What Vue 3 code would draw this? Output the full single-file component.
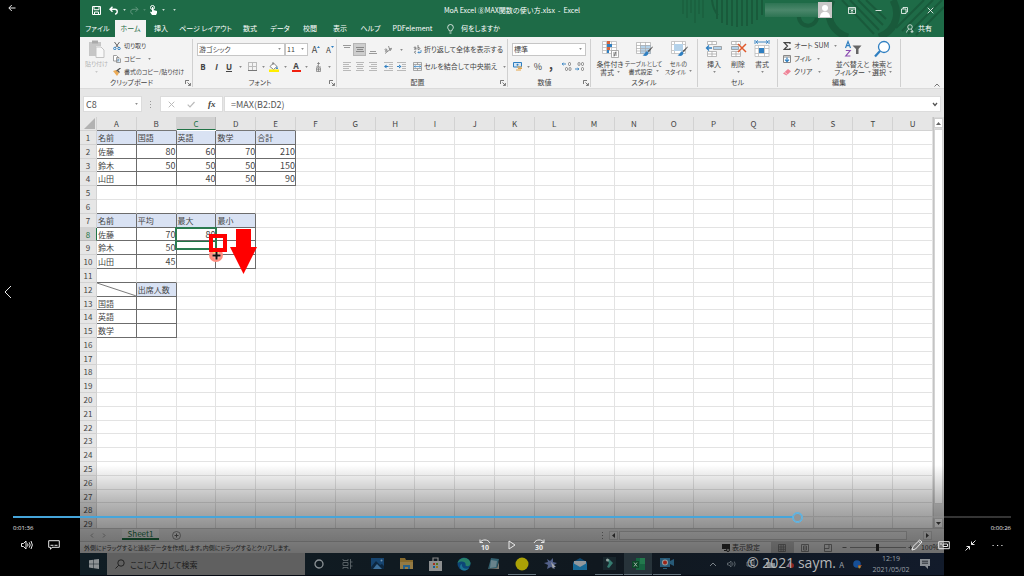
<script setup>
import { ref, computed } from 'vue'

const columns = 'ABCDEFGHIJKLMNOPQRSTU'.split('')
const tabs = [
  { label: 'ファイル', size: 'w35' },
  { label: 'ホーム', size: 'w31', active: true },
  { label: '挿入', size: 'w30' },
  { label: 'ページ レイアウト', size: 'w59' },
  { label: '数式', size: 'w30' },
  { label: 'データ', size: 'w30' },
  { label: '校閲', size: 'w30' },
  { label: '表示', size: 'w30' },
  { label: 'ヘルプ', size: 'w31' },
  { label: 'PDFelement', size: 'w53' },
]

const data = {
  1: ['名前', '国語', '英語', '数学', '合計'],
  2: ['佐藤', 80, 60, 70, 210],
  3: ['鈴木', 50, 50, 50, 150],
  4: ['山田', '', 40, 50, 90],
  7: ['名前', '平均', '最大', '最小'],
  8: ['佐藤', 70, 80, ''],
  9: ['鈴木', 50, '', ''],
  10: ['山田', 45, '', ''],
  12: ['', '出席人数'],
  13: ['国語', ''],
  14: ['英語', ''],
  15: ['数学', ''],
}
const inTable = (r, c) => Boolean(data[r]) && c < data[r].length
const rows = Array.from({ length: 29 }, (_, i) => {
  const r = i + 1
  return {
    r,
    cells: columns.map((_, c) => {
      const value = inTable(r, c) ? data[r][c] : ''
      return {
        value,
        cls: {
          num: typeof value === 'number',
          head: inTable(r, c) && (r === 1 || r === 7 || (r === 12 && c === 1)),
          db: inTable(r, c) || inTable(r + 1, c),
          dr: inTable(r, c) || inTable(r, c + 1),
          diag: r === 12 && c === 0,
        },
      }
    }),
  }
})

const fontName = ref('游ゴシック')
const fontSize = ref('11')
const numberFormat = ref('標準')
const formula = ref('=MAX(B2:D2)')
const cellName = ref('C8')
const zoom = ref(50)
const seek = ref(789)
const seekStyle = computed(() => ({ '--played': seek.value / 10 + '%' }))
</script>

<template>
  <svg class="defs" aria-hidden="true">
    <symbol id="caret" viewBox="0 0 4 3"><path d="M0 .5h4L2 2.7z" fill="currentColor" /></symbol>
    <symbol id="launch" viewBox="0 0 6 6"><path d="M.5 4V.5H4M2.5 2.5l2.8 2.8M5.4 3v2.4H3" fill="none" stroke="currentColor" stroke-width=".7" /></symbol>
    <symbol id="brush" viewBox="0 0 10 10"><path d="M9.600 .5L5 4.500l1.200 1.200L9.900 1z" fill="#555" /><path d="M4.600 4.800C3 5 3 7.500 .5 8.500c2.500 1.500 5.500 .5 5.300-2.500z" fill="#2f7fc1" /></symbol>
  </svg>

  <main class="player">
    <aside class="side">
      <button class="pb top" aria-label="戻る"><svg width="8" height="8" viewBox="0 0 8 8"><path d="M7.500 4H1M3.800 1L.8 4l3 3" /></svg></button>
      <button class="pb prev" aria-label="前へ"><svg width="8" height="14" viewBox="0 0 8 14"><path d="M7 1L1 7l6 6" /></svg></button>
    </aside>

    <section class="desktop">
      <div class="excel">
        <header class="green">
          <svg class="art" width="270" height="37" viewBox="0 0 270 37" aria-hidden="true">
            <g fill="none" stroke="#195a3b" stroke-width="2">
              <path d="M9 0v14M13 0v18M17 0v13M21 0v23M25 0v14M29 0v18" stroke-width="1" />
              <path d="M38 0q1 10 6 15M43 0v19M48 0v23M53 0v25M58 0v26M63 0v27M68 0v26M73 0v26M78 0v24M83 0v20M88 0v15" />
              <path d="M125 15a9 9 0 0 0 18 3" stroke-width="4" />
              <path d="M158 0c-8 16 0 32 16 37M205 37c20-8 20-26 14-37" stroke-width="7" />
              <path d="M168 0l32 34M176 0l29 30M184 0l25 25M192 0l20 19M222 28l28-28M228 31l31-31M234 34l34-34M242 35l28-28" />
            </g>
          </svg>
          <div class="titlebar">
            <div class="quick">
              <button aria-label="上書き保存"><svg width="9" height="9" viewBox="0 0 9 9"><path d="M.5.5h8v8h-8zM2 .5v3.200h5V.5M2.500 8.500V6h4v2.500" fill="none" stroke="#fff" /></svg></button>
              <button aria-label="元に戻す"><svg width="9" height="9" viewBox="0 0 9 9"><path d="M3.500.8L1 3.300l2.500 2.500M1.200 3.300H6c3 0 3 4.500 0 4.800" fill="none" stroke="#fff" stroke-width="1.400" /></svg></button>
              <svg class="caret"><use href="#caret" /></svg>
              <button class="off" aria-label="やり直し"><svg width="9" height="9" viewBox="0 0 9 9"><path d="M5.500.8L8 3.300 5.500 5.800M7.800 3.300H3c-3 0-3 4.500 0 4.800" fill="none" stroke="#fff" /></svg></button>
              <svg class="caret off"><use href="#caret" /></svg>
              <button aria-label="タッチ"><svg width="9" height="10" viewBox="0 0 9 10"><circle cx="3.500" cy="2.500" r="2" fill="none" stroke="#fff" /><path d="M3 2h1.300v3L8 6v2L7 10H3L1 7l1-.5 1 .8z" fill="#fff" /></svg></button>
              <svg class="caret"><use href="#caret" /></svg>
              <svg class="caret last"><use href="#caret" /></svg>
            </div>
            <h1>MoA Excel ⑧MAX関数の使い方.xlsx&nbsp; -&nbsp; Excel</h1>
            <div class="winbtns">
              <span class="account"></span>
              <svg width="14" height="16" viewBox="0 0 14 16"><path fill="#c9c7c7" d="M0 0h14v16H0z" /><circle cx="7" cy="6" r="3" fill="#fff" /><path d="M2 15c0-7 10-7 10 0z" fill="#fff" /></svg>
              <button aria-label="リボンの表示オプション"><svg width="8" height="7" viewBox="0 0 8 7"><path d="M.5.5h7v6h-7zM.5 2h7M4 6V3M2.700 4.200L4 3l1.300 1.200" /></svg></button>
              <button aria-label="最小化"><svg width="7" height="7" viewBox="0 0 7 7"><path d="M.5 3.500h6" /></svg></button>
              <button aria-label="元に戻す(縮小)"><svg width="7" height="7" viewBox="0 0 7 7"><path d="M.5 2h4.500v4.500H.5zM2 2V.5h4.500V5H5" /></svg></button>
              <button aria-label="閉じる"><svg width="7" height="7" viewBox="0 0 7 7"><path d="M.7.7l5.600 5.600M6.300.7L.7 6.300" /></svg></button>
            </div>
          </div>
          <nav class="tabs">
            <button v-for="t in tabs" :key="t.label" :class="[t.size, { active: t.active }]">{{ t.label }}</button>
            <button class="tell"><svg width="7" height="10" viewBox="0 0 7 10"><path d="M2.300 7C2.300 5.500.7 5 .7 3.300a2.800 2.800 0 0 1 5.600 0C6.300 5 4.700 5.500 4.700 7zM2.500 9h2" fill="none" stroke="#fff" stroke-width=".8" /></svg>何をしますか</button>
            <button class="share"><svg width="8" height="9" viewBox="0 0 8 9"><circle cx="4" cy="3" r="2.300" fill="none" stroke="#fff" stroke-width=".7" /><path d="M.5 8.500C1 6.500 2 5.500 3 5.200M5 5.200c1 .3 1 .8 1.500 1.500M4.500 7.700h3M6 6.200v3" fill="none" stroke="#fff" stroke-width=".7" /></svg>共有</button>
          </nav>
        </header>

        <div class="ribbon">
          <section class="group g-clip">
            <div class="body">
              <button class="big paste"><svg width="17" height="18" viewBox="0 0 17 18"><path d="M1 2h12v4H8v10H1z" fill="#c6c6c6" /><path d="M4 .5h6v3H4z" fill="#aaa" /><path d="M8 7h5l3 3v7.500H8z" fill="#f8f8f8" stroke="#c3c3c3" /></svg><span>貼り付け</span><svg class="caret"><use href="#caret" /></svg></button>
              <div class="list">
                <button><svg width="8" height="8" viewBox="0 0 8 8"><path d="M1.500 0l4 5.500M6.500 0l-4 5.500" stroke="#555" fill="none" stroke-width=".9" /><circle cx="1.800" cy="6.500" r="1.200" fill="none" stroke="#2f7fc1" /><circle cx="6" cy="6.500" r="1.200" fill="none" stroke="#2f7fc1" /></svg>切り取り</button>
                <button><svg width="8" height="8" viewBox="0 0 8 8"><path d="M.5.5h3L5 2v4H.5zM3.500 2.500h2.500l1.500 1.500v3.500h-4z" fill="#fff" stroke="#888" stroke-width=".8" /><path d="M4.500 4.700h2M4.500 6h2" stroke="#2f7fc1" stroke-width=".6" /></svg>コピー<svg class="caret"><use href="#caret" /></svg></button>
                <button><svg width="8" height="8" viewBox="0 0 8 8"><path d="M0 3l3-1 3 3-2 3z" fill="#edab55" /><path d="M3.500 3L7.500 0M4 2l2.500 2.500" stroke="#555" stroke-width="1.200" /></svg>書式のコピー/貼り付け</button>
              </div>
            </div>
            <footer><span>クリップボード</span><button aria-label="クリップボード詳細"><svg width="6" height="6"><use href="#launch" /></svg></button></footer>
          </section>

          <section class="group g-font">
            <div class="body rows">
              <div class="line font-top">
                <span class="sel"><select v-model="fontName" aria-label="フォント名"><option>游ゴシック</option></select><svg class="caret"><use href="#caret" /></svg></span>
                <span class="sel"><select v-model="fontSize" aria-label="フォント サイズ"><option>11</option></select><svg class="caret"><use href="#caret" /></svg></span>
                <button class="aa">A<svg width="3" height="3" viewBox="0 0 3 3"><path d="M0 3l1.500-2L3 3z" fill="#2f7fc1" /></svg></button>
                <button class="aa sm">A<svg width="3" height="3" viewBox="0 0 3 3"><path d="M0 1l1.500 2L3 1z" fill="#2f7fc1" /></svg></button>
              </div>
              <div class="line font-bot">
                <button class="b">B</button><button class="it">I</button><button class="u">U</button><svg class="caret"><use href="#caret" /></svg>
                <button aria-label="罫線"><svg width="9" height="9" viewBox="0 0 9 9"><path d="M.5 0v8M4.500 0v8M8.500 0v8M0 .5h9M0 4.500h9" stroke="#bbb" /><path d="M0 8.500h9" stroke="#777" /></svg></button><svg class="caret"><use href="#caret" /></svg>
                <button aria-label="塗りつぶし"><svg width="10" height="10" viewBox="0 0 10 10"><path d="M1 4.500L4.500 1 8 4.500 4.500 7.500zM4 0v3" fill="#fff" stroke="#666" stroke-width=".8" /><path d="M8 4l1 3H7z" fill="#2f7fc1" /><path d="M0 7.500h10V10H0z" fill="#ffee00" /></svg></button><svg class="caret"><use href="#caret" /></svg>
                <button class="fc">A</button><svg class="caret"><use href="#caret" /></svg>
                <button aria-label="ふりがな"><svg width="7" height="10" viewBox="0 0 7 10"><path d="M2 1.500h3M3.500 0v3.500L2 4M1 5h5M3.500 4v1M1.500 6h4v3.500h-4zM1.500 7.700h4M3.500 6v3.500" fill="none" stroke="#777" stroke-width=".7" /></svg></button><svg class="caret"><use href="#caret" /></svg>
              </div>
            </div>
            <footer><span>フォント</span><button aria-label="フォント詳細"><svg width="6" height="6"><use href="#launch" /></svg></button></footer>
          </section>

          <section class="group g-align">
            <div class="body rows">
              <div class="line al">
                <button aria-label="上揃え"><svg width="8" height="9" viewBox="0 0 8 9"><path d="M0 .5h8M1 2.500h6" stroke="#999" /></svg></button>
                <button class="on" aria-label="上下中央揃え"><svg width="8" height="9" viewBox="0 0 8 9"><path d="M0 2.500h8M1 4.500h6M0 6.500h8" stroke="#888" /></svg></button>
                <button aria-label="下揃え"><svg width="8" height="9" viewBox="0 0 8 9"><path d="M1 6.500h6M0 8.500h8" stroke="#999" /></svg></button>
                <i></i>
                <button aria-label="方向"><svg width="9" height="8" viewBox="0 0 9 8"><path d="M1 7.500L8 2M1 4c0-2 2-1 2 0v1.500M3 4c-2 0-2.500 2-.5 1.500M4.500 0l1.500 4.500c1.500 0 1.500-2.500-.5-2" fill="none" stroke="#777" stroke-width=".8" /></svg></button>
                <svg class="caret"><use href="#caret" /></svg>
                <i></i>
                <button class="txt"><svg width="9" height="9" viewBox="0 0 9 9"><path d="M1 3c0-1.500 2-1.500 2 0v1.500M3 3.300c-2 0-2.300 1.500-.5 1.200M5 0v4.500c2.500.5 2.500-2.500 0-2M3 6.200c-2-.5-2 2.500 0 2" fill="none" stroke="#666" stroke-width=".8" /><path d="M8 5v2.500H5M6 6.300L5 7.500l1 1" fill="none" stroke="#2f7fc1" stroke-width=".8" /></svg>折り返して全体を表示する</button>
              </div>
              <div class="line al">
                <button aria-label="左揃え"><svg width="8" height="9" viewBox="0 0 8 9"><path d="M0 .5h8M0 2.500h6M0 4.500h8M0 6.500h6M0 8.500h8" stroke="#aaa" stroke-width=".8" /></svg></button>
                <button aria-label="中央揃え"><svg width="8" height="9" viewBox="0 0 8 9"><path d="M0 .5h8M1 2.500h6M0 4.500h8M1 6.500h6M0 8.500h8" stroke="#aaa" stroke-width=".8" /></svg></button>
                <button aria-label="右揃え"><svg width="8" height="9" viewBox="0 0 8 9"><path d="M0 .5h8M2 2.500h6M0 4.500h8M2 6.500h6M0 8.500h8" stroke="#aaa" stroke-width=".8" /></svg></button>
                <i></i>
                <button aria-label="インデントを減らす"><svg width="9" height="9" viewBox="0 0 9 9"><path d="M0 .5h9M5 2.500h4M5 4.500h4M5 6.500h4M0 8.500h9" stroke="#aaa" stroke-width=".8" /><path d="M0 4.500L2.500 2.500v4zM2 4h2.500v1H2z" fill="#2f7fc1" /></svg></button>
                <button aria-label="インデントを増やす"><svg width="9" height="9" viewBox="0 0 9 9"><path d="M0 .5h9M5 2.500h4M5 4.500h4M5 6.500h4M0 8.500h9" stroke="#aaa" stroke-width=".8" /><path d="M4.500 4.500L2 2.500v4zM0 4h2.500v1H0z" fill="#2f7fc1" /></svg></button>
                <i></i>
                <button class="txt"><svg width="9" height="9" viewBox="0 0 9 9"><path d="M.5.5h8v8h-8zM.5 2.500h8M.5 6.500h8M4.500.5v2M4.500 6.500v2" fill="none" stroke="#888" stroke-width=".7" /><path d="M1 4.500h7M2.500 3.500l-1.300 1 1.300 1M6.500 3.500l1.300 1-1.300 1" fill="none" stroke="#2f7fc1" stroke-width=".7" /></svg>セルを結合して中央揃え<svg class="caret"><use href="#caret" /></svg></button>
              </div>
            </div>
            <footer><span>配置</span><button aria-label="配置詳細"><svg width="6" height="6"><use href="#launch" /></svg></button></footer>
          </section>

          <section class="group g-num">
            <div class="body rows">
              <div class="line num-top"><span class="sel"><select v-model="numberFormat" aria-label="数値の書式"><option>標準</option></select><svg class="caret"><use href="#caret" /></svg></span></div>
              <div class="line num-bot">
                <button aria-label="通貨"><svg width="10" height="9" viewBox="0 0 10 9"><path d="M.5.5h8v4.500h-8z" fill="#d6e6f4" stroke="#2f7fc1" /><circle cx="4.500" cy="2.800" r="1" fill="#2f7fc1" /><path d="M4 5h5M5 6.500h4M3 8h5" stroke="#e5a54b" stroke-width="1.200" /></svg></button>
                <svg class="caret"><use href="#caret" /></svg>
                <button class="pct">%</button><button class="comma">,</button><i></i>
                <button aria-label="小数点以下の表示桁数を増やす"><svg width="10" height="9" viewBox="0 0 10 9"><path d="M0 2h4M1.500.7L.2 2l1.300 1.300" fill="none" stroke="#2f7fc1" stroke-width=".9" /><rect x="6.500" y=".5" width="2" height="3" rx="1" fill="none" stroke="#666" stroke-width=".7" /><rect x="3.500" y="5.500" width="2" height="3" rx="1" fill="none" stroke="#666" stroke-width=".7" /><rect x="7" y="5.500" width="2" height="3" rx="1" fill="none" stroke="#666" stroke-width=".7" /></svg></button>
                <button aria-label="小数点以下の表示桁数を減らす"><svg width="10" height="9" viewBox="0 0 10 9"><path d="M0 7h4M2.500 5.700L3.800 7 2.500 8.300" fill="none" stroke="#2f7fc1" stroke-width=".9" /><rect x="3" y=".5" width="2" height="3" rx="1" fill="none" stroke="#666" stroke-width=".7" /><rect x="6.500" y=".5" width="2" height="3" rx="1" fill="none" stroke="#666" stroke-width=".7" /><rect x="6.500" y="5.500" width="2" height="3" rx="1" fill="none" stroke="#666" stroke-width=".7" /></svg></button>
              </div>
            </div>
            <footer><span>数値</span><button aria-label="数値詳細"><svg width="6" height="6"><use href="#launch" /></svg></button></footer>
          </section>

          <section class="group g-style">
            <div class="body">
              <button class="big"><svg width="18" height="18" viewBox="0 0 18 18"><path d="M1.500 1.500h14v12h-14zM1.500 4.500h14M1.500 7.500h14M1.500 10.500h14M5.500 1.500v12M10.500 1.500v12" fill="#fff" stroke="#bbb" stroke-width=".8" /><path d="M6 1h3v3H6zM6 7h3v3H6z" fill="#d9663b" /><path d="M6 4h5v3H6zM6 10h2v3H6z" fill="#2f7fc1" /><path d="M10.500 10.500h7v7h-7z" fill="#fff" stroke="#999" stroke-width=".8" /><path d="M12 13h4M12 15h4M15 11.500l-2 5" stroke="#555" stroke-width=".7" /></svg><span>条件付き<br>書式<svg class="caret"><use href="#caret" /></svg></span></button>
              <button class="big narrow"><svg width="18" height="18" viewBox="0 0 18 18"><path d="M1.500 2.500h14v11h-14z" fill="#fff" /><path d="M5 5h11v9H5z" fill="#b4d2ea" /><path d="M1.500 2.500h14v11h-14zM1.500 5.500h14M1.500 8.500h14M1.500 11h14M5.500 2.500v11M10.500 2.500v11" fill="none" stroke="#aaa" stroke-width=".7" /><use href="#brush" x="7" y="6" width="11" height="11" /></svg><span>テーブルとして<br>書式設定<svg class="caret"><use href="#caret" /></svg></span></button>
              <button class="big narrow"><svg width="18" height="18" viewBox="0 0 18 18"><path d="M1.500 1.500h14v12h-14zM1.500 4.500h14M1.500 10.500h14M4.500 1.500v12M12.500 1.500v12" fill="#fff" stroke="#bbb" stroke-width=".8" /><path d="M4 4h9v7H4z" fill="#b4d2ea" /><use href="#brush" x="7" y="6" width="11" height="11" /></svg><span>セルの<br>スタイル<svg class="caret"><use href="#caret" /></svg></span></button>
            </div>
            <footer><span>スタイル</span></footer>
          </section>

          <section class="group g-cell">
            <div class="body">
              <button class="big"><svg width="18" height="18" viewBox="0 0 18 18"><path d="M2.500 1.500h9v3h-9zM7 1.500v3M2.500 11.500h9v5h-9zM7 11.500v5M2.500 14h9" fill="#fff" stroke="#aaa" stroke-width=".8" /><path d="M8.500 6.500h8v3h-8z" fill="#b4d2ea" stroke="#888" stroke-width=".7" /><path d="M7 8H1.500M4 5.500L1.500 8 4 10.500" fill="none" stroke="#2f7fc1" stroke-width="1.300" /></svg><span>挿入</span><svg class="caret"><use href="#caret" /></svg></button>
              <button class="big"><svg width="18" height="18" viewBox="0 0 18 18"><path d="M2.500 1.500h9v3h-9zM7 1.500v3M2.500 11.500h9v5h-9zM7 11.500v5M2.500 14h9" fill="#fff" stroke="#aaa" stroke-width=".8" /><path d="M2.500 6.500h7v3h-7z" fill="#b4d2ea" stroke="#888" stroke-width=".7" /><path d="M9 4l8 8M17 4l-8 8" stroke="#e0592b" stroke-width="1.500" /></svg><span>削除</span><svg class="caret"><use href="#caret" /></svg></button>
              <button class="big"><svg width="18" height="18" viewBox="0 0 18 18"><path d="M2 5.500h14v11H2zM2 8.500h14M2 13.500h14M5.500 5.500v11M11.500 5.500v11" fill="#fff" stroke="#bbb" stroke-width=".8" /><path d="M6 8h5v5H6z" fill="#2f7fc1" /><path d="M3 2h12M5 .3L3 2l2 1.700M13 .3L15 2l-2 1.700M2 0v4M16 0v4" fill="none" stroke="#2f7fc1" stroke-width=".9" /></svg><span>書式</span><svg class="caret"><use href="#caret" /></svg></button>
            </div>
            <footer><span>セル</span></footer>
          </section>

          <section class="group g-edit">
            <div class="body">
              <div class="list">
                <button><svg width="8" height="8" viewBox="0 0 8 8"><path d="M7 2V.7H1.300L4.500 4 1.300 7.300H7V6" fill="none" stroke="#444" stroke-width="1.200" /></svg>オート SUM<svg class="caret"><use href="#caret" /></svg></button>
                <button><svg width="8" height="8" viewBox="0 0 8 8"><path d="M.5.5h7v7h-7zM.5 2h7" fill="#fff" stroke="#888" /><path d="M4 2.500v4M2 4.700l2 2 2-2" fill="none" stroke="#2f7fc1" stroke-width="1.200" /></svg>フィル<svg class="caret"><use href="#caret" /></svg></button>
                <button><svg width="8" height="8" viewBox="0 0 8 8"><path d="M0 5.500L5 1l3 2.300L3.500 7.500z" fill="#ef8296" /><path d="M1.500 4.200l3 2.300" stroke="#fff" stroke-width=".6" /></svg>クリア<svg class="caret"><use href="#caret" /></svg></button>
              </div>
              <button class="big sort"><svg width="18" height="18" viewBox="0 0 18 18"><path d="M1.500 8L4 1.500 6.500 8M2.500 5.700h3" fill="none" stroke="#2f7fc1" stroke-width="1.200" /><path d="M1.800 10.500h4.400L1.800 16h4.600" fill="none" stroke="#8a4bb0" stroke-width="1.200" /><path d="M8.500 5.500h9L14.500 9v5h-2.500V9z" fill="#666" /></svg><span>並べ替えと<br>フィルター<svg class="caret"><use href="#caret" /></svg></span></button>
              <button class="big find"><svg width="18" height="18" viewBox="0 0 18 18"><circle cx="11" cy="7" r="5.500" fill="#fff" stroke="#2f7fc1" stroke-width="1.300" /><path d="M7 11l-5 5.500" stroke="#2f7fc1" stroke-width="2.200" /></svg><span>検索と<br>選択<svg class="caret"><use href="#caret" /></svg></span></button>
            </div>
            <footer><span>編集</span></footer>
          </section>
          <button class="collapse" aria-label="リボンを折りたたむ"><svg width="6" height="4" viewBox="0 0 6 4"><path d="M.5 3.500L3 1l2.500 2.500" fill="none" stroke="#555" stroke-width=".8" /></svg></button>
        </div>

        <div class="formula">
          <div class="name"><input v-model="cellName" aria-label="名前ボックス"><svg class="caret"><use href="#caret" /></svg></div>
          <svg class="grip" width="3" height="9" viewBox="0 0 3 9"><path d="M1 1h1v1H1zM1 4h1v1H1zM1 7h1v1H1z" fill="#999" /></svg>
          <div class="fx">
            <button aria-label="キャンセル"><svg width="7" height="7" viewBox="0 0 7 7"><path d="M.7.7l5.600 5.600M6.300.7L.7 6.300" fill="none" stroke="#bbb" /></svg></button>
            <button aria-label="入力"><svg width="8" height="7" viewBox="0 0 8 7"><path d="M.7 3.700L3 6l4.500-5" fill="none" stroke="#bbb" stroke-width="1.200" /></svg></button>
            <button class="fn">fx</button>
          </div>
          <div class="fin"><input v-model="formula" aria-label="数式"><svg width="6" height="5" viewBox="0 0 6 5"><path d="M1 1l2 2.500L5 1" fill="none" stroke="#555" stroke-width="1.300" /></svg></div>
        </div>

        <div class="sheet">
          <div class="gridwrap">
            <table>
              <thead>
                <tr>
                  <th class="corner"><svg width="11" height="11" viewBox="0 0 11 11"><path d="M11 0v11H0z" fill="#b2b2b2" /></svg></th>
                  <th v-for="(c, i) in columns" :key="c" :class="{ sel: c === 'C', dk: i < 5 && c !== 'C' }">{{ c }}</th>
                </tr>
              </thead>
              <tbody>
                <tr v-for="row in rows" :key="row.r">
                  <th :class="{ sel: row.r === 8 }">{{ row.r }}</th>
                  <td v-for="(cell, i) in row.cells" :key="i" :class="cell.cls">{{ cell.value }}<svg v-if="cell.cls.diag" viewBox="0 0 40 13" preserveAspectRatio="none"><path d="M0 0l40 13" stroke="#555" stroke-width=".8" /></svg></td>
                </tr>
              </tbody>
            </table>
            <div class="active-cell"></div>
            <div class="drag"></div>
            <svg class="marks" width="50" height="48" viewBox="0 0 50 48" aria-hidden="true">
              <circle cx="8" cy="27" r="7" fill="#ff8d7f" />
              <path d="M5 21h6v4H5z" fill="#e6e05a" />
              <path d="M8.500 23.500v8M4.500 27.500h8" stroke="#fff" stroke-width="3.600" opacity=".5" />
              <path d="M8.500 23.500v8M4.500 27.500h8" stroke="#111" stroke-width="2" />
              <path d="M3 8h14v14H3z" fill="none" stroke="#f00" stroke-width="4" />
              <path d="M28 1h15v18h6L35.500 46 22 19h6z" fill="#f00" />
            </svg>
          </div>
          <div class="vscroll">
            <button aria-label="上へ"><svg width="5" height="3" viewBox="0 0 5 3"><path d="M0 3l2.500-3L5 3z" fill="#666" /></svg></button>
            <span class="thumb"></span>
            <button aria-label="下へ"><svg width="5" height="3" viewBox="0 0 5 3"><path d="M0 0l2.500 3L5 0z" fill="#444" /></svg></button>
          </div>
        </div>

        <div class="sheetbar">
          <button class="nav" aria-label="前のシート"><svg width="4" height="5" viewBox="0 0 4 5"><path d="M3 .5l-2 2 2 2" fill="none" stroke="#999" /></svg></button>
          <button class="nav" aria-label="次のシート"><svg width="4" height="5" viewBox="0 0 4 5"><path d="M1 .5l2 2-2 2" fill="none" stroke="#999" /></svg></button>
          <button class="sh">Sheet1</button>
          <button class="add" aria-label="新しいシート"><svg width="9" height="9" viewBox="0 0 9 9"><circle cx="4.500" cy="4.500" r="4" fill="none" stroke="#777" stroke-width=".8" /><path d="M2.500 4.500h4M4.500 2.500v4" stroke="#666" /></svg></button>
          <div class="hscroll">
            <svg class="grip" width="3" height="9" viewBox="0 0 3 9"><path d="M1 1h1v1H1zM1 4h1v1H1zM1 7h1v1H1z" fill="#888" /></svg>
            <button aria-label="左へ"><svg width="3" height="5" viewBox="0 0 3 5"><path d="M3 0L0 2.500 3 5z" fill="#444" /></svg></button>
            <span class="thumb"></span>
            <button aria-label="右へ"><svg width="3" height="5" viewBox="0 0 3 5"><path d="M0 0l3 2.500L0 5z" fill="#444" /></svg></button>
          </div>
        </div>

        <div class="status">
          <p>外側にドラッグすると連続データを作成します。内側にドラッグするとクリアします。</p>
          <button class="disp"><svg width="8" height="8" viewBox="0 0 8 8"><path d="M0 0h8v5H0zM2 6h3v1H2z" fill="#333" /><circle cx="6" cy="6" r="1.500" fill="#eee" stroke="#333" /></svg>表示設定</button>
          <button class="view on" aria-label="標準"><svg width="8" height="8" viewBox="0 0 8 8"><path d="M.5.5h7v7h-7zM.5 3h7M.5 5.300h7M3 .5v7M5.300.5v7" fill="none" stroke="#777" stroke-width=".8" /></svg></button>
          <button class="view" aria-label="ページ レイアウト"><svg width="8" height="8" viewBox="0 0 8 8"><path d="M.5.5h7v7h-7zM2.500 2h3v4h-3zM2.500 4h3" fill="none" stroke="#777" stroke-width=".8" /></svg></button>
          <button class="view" aria-label="改ページ プレビュー"><svg width="8" height="8" viewBox="0 0 8 8"><path d="M.5.5h7v7h-7zM.5 4.500h4.500V.5" fill="none" stroke="#777" stroke-width=".8" /></svg></button>
          <button class="zm" aria-label="縮小"><svg width="5" height="5" viewBox="0 0 5 5"><path d="M.5 2.500h4" stroke="#777" /></svg></button>
          <input v-model="zoom" class="zoom" type="range" min="0" max="100" aria-label="ズーム">
          <button class="zm" aria-label="拡大"><svg width="5" height="5" viewBox="0 0 5 5"><path d="M.5 2.500h4M2.500.5v4" stroke="#777" /></svg></button>
          <span class="pc">100%</span>
        </div>
        <div class="shade"></div>
      </div>

      <div class="taskbar">
        <button class="start" aria-label="スタート"><svg width="10" height="10" viewBox="0 0 10 10"><path d="M0 1.300L4.500.7v4H0zM5 .6L10 0v4.700H5zM0 5.200h4.500v4L0 8.600zM5 5.200h5V10l-5-.7z" fill="#8c9194" /></svg></button>
        <label class="search"><svg width="10" height="10" viewBox="0 0 10 10"><circle cx="6" cy="4" r="3.200" fill="none" stroke="#222" /><path d="M3.700 6.300L.5 9.500" stroke="#222" /></svg><input placeholder="ここに入力して検索" aria-label="検索"></label>
        <div class="apps">
          <button aria-label="Cortana"><svg width="10" height="10" viewBox="0 0 10 10"><circle cx="5" cy="5" r="4" fill="none" stroke="#8c9296" stroke-width="1.300" /></svg></button>
          <button aria-label="タスク ビュー"><svg width="12" height="10" viewBox="0 0 12 10"><path d="M1 3.500h5v3H1zM1 1V0M1 1.500h5V0M1 10V8.500h5V10M8.500 0v10M8 3h2.500M8 7h2.500" fill="none" stroke="#5d666b" stroke-width=".9" /></svg></button>
          <button aria-label="フォト"><svg width="13" height="11" viewBox="0 0 13 11"><path d="M0 0h13v11H0z" fill="#16446f" /><path d="M0 9l5-6 4 4 2-1 2 2v3H0z" fill="#0c263f" /><path d="M2 11l4-5 5 5z" fill="#3c6e99" /><circle cx="10.500" cy="2.500" r="1" fill="#6d90ad" /></svg></button>
          <button aria-label="エクスプローラー"><svg width="13" height="11" viewBox="0 0 13 11"><path d="M0 0h5l1 2h7v9H0z" fill="#86692c" /><path d="M0 4h13v7H0z" fill="#947a43" /><path d="M3 11V7h7v4H8V9H5v2z" fill="#27618a" /></svg></button>
          <button aria-label="Store"><svg width="13" height="14" viewBox="0 0 13 14"><path d="M4 4V1h5v3" fill="none" stroke="#888" stroke-width="1.200" /><path d="M0 4h13v10H0z" fill="#8d8f90" /><path d="M4 6h2v2H4z" fill="#a3321b" /><path d="M7 6h2v2H7z" fill="#4c7a20" /><path d="M4 9h2v2H4z" fill="#17618d" /><path d="M7 9h2v2H7z" fill="#9b7918" /></svg></button>
          <button aria-label="Edge"><svg width="14" height="14" viewBox="0 0 14 14"><circle cx="7" cy="7" r="6.500" fill="#0c4678" /><path d="M.7 6C2 0 12-1 13.500 6c.3 3-3.500 4-5 2.500C9.500 5 5 3 .7 6z" fill="#278068" /><path d="M5 7c-1 4 4 6 7 4-3 4-9 3-9-1 0-2 1-3 2-3z" fill="#1c7391" /></svg></button>
          <button aria-label="メモ帳"><svg width="13" height="12" viewBox="0 0 13 12"><path d="M4 0l8 1-2 9-9 1z" fill="#32606f" /><path d="M4 2l6 1-1 6-6 1z" fill="#69838c" /><path d="M1 11l9-1 2-6 0 7z" fill="#7a7870" /></svg></button>
          <button class="run" aria-label="録画"><svg width="14" height="14" viewBox="0 0 14 14"><circle cx="7" cy="7" r="6.500" fill="#aaa106" /></svg></button>
          <button aria-label="ツール"><svg width="14" height="12" viewBox="0 0 14 12"><path d="M3 1l3 2 3-3v4l4 1-3 2 1 4-4-2-4 2 1-4-4-2 4-1z" fill="#53618a" /><path d="M7 4l5 5-2 0-1 2z" fill="#a4a6a9" /></svg></button>
          <button aria-label="メール"><svg width="14" height="12" viewBox="0 0 14 12"><path d="M0 4l7-4 7 4v8H0z" fill="#0e4870" /><path d="M1 3h12v4l-6 3-6-3z" fill="#92989c" /><path d="M0 5l7 4 7-4v7H0z" fill="#186996" /></svg></button>
          <button class="run" aria-label="Filmora"><svg width="13" height="13" viewBox="0 0 13 13"><path d="M0 0h13v13H0z" fill="#18262c" /><path d="M4 3l2-1 4 4-4 5-2-1 2-4z" fill="#357b70" /><circle cx="4.500" cy="3" r="1.500" fill="#93a5a2" /></svg></button>
          <button class="run lit" aria-label="Excel"><svg width="13" height="12" viewBox="0 0 13 12"><path d="M4 0h9v12H4z" fill="#176340" /><path d="M8 0h5v6H8z" fill="#23794d" /><path d="M0 3h7v7H0z" fill="#0d4728" /><path d="M2 4.500l3 4M5 4.500l-3 4" stroke="#a2b4aa" /></svg></button>
          <button class="run" aria-label="レコーダー"><svg width="14" height="12" viewBox="0 0 14 12"><path d="M0 0h10v9H0zM10 3l4-2v7l-4-2zM3 10h4v1H3z" fill="#275a78" /><circle cx="5" cy="4.500" r="3" fill="#999" /><circle cx="5" cy="4.500" r="2" fill="#9b2418" /></svg></button>
        </div>
        <div class="tray">
          <svg width="8" height="5" viewBox="0 0 8 5"><path d="M1 4l3-3 3 3" fill="none" stroke="#798087" /></svg>
          <svg width="9" height="8" viewBox="0 0 9 8"><path d="M.5 3h1.500L4 1v6L2 5H.5zM5.500 2.500q1 1.500 0 3M7.300 1.500q1.700 2.500 0 5" fill="none" stroke="#6a7279" stroke-width=".8" /></svg>
          <svg width="10" height="8" viewBox="0 0 10 8"><path d="M1 2h5v4H1zM3 .5h5v5M7 6l2 1" fill="none" stroke="#6a7279" /></svg>
          <svg width="10" height="8" viewBox="0 0 10 8"><path d="M0 2h4l1 1h4v5H1z" fill="#7d858a" /></svg>
          <svg width="8" height="8" viewBox="0 0 8 8"><path d="M0 7l4-6 3 6z" fill="#778" /><circle cx="5.500" cy="5.500" r="2.500" fill="#8a2424" /></svg>
        </div>
        <span class="ime">A</span>
        <svg class="ball" width="9" height="9" viewBox="0 0 9 9"><circle cx="4" cy="4" r="3.800" fill="#174f96" /><path d="M5 5h4L6 9z" fill="#9a4a2c" /><circle cx="6.500" cy="7" r="1.200" fill="#a98e38" /></svg>
        <div class="clock"><span>12:19</span><span>2021/05/02</span></div>
        <button class="note" aria-label="通知"><svg width="10" height="10" viewBox="0 0 10 10"><path d="M0 0h10v7H8v3L5 7H0z" fill="#8a8f95" /><path d="M2 2.200h6M2 4.200h6" stroke="#2a3138" /></svg></button>
      </div>
    </section>

    <aside class="side"></aside>

    <p class="mark">© 2021 saym.</p>
    <div class="controls">
      <input v-model="seek" class="seek" type="range" min="0" max="1000" aria-label="再生位置" :style="seekStyle">
      <div class="times"><span>0:01:36</span><span>0:00:26</span></div>
      <div class="bar">
        <div class="set">
          <button class="pb" aria-label="音量"><svg width="12" height="10" viewBox="0 0 12 10"><path d="M.5 3.500h2L5 1v8L2.500 6.500h-2zM6.500 3.500q1 1.500 0 3M8.200 2.300q2 2.700 0 5.400M10 1q2.700 4 0 8" /></svg></button>
          <button class="pb" aria-label="字幕"><svg width="12" height="10" viewBox="0 0 12 10"><path d="M.7.7h10.600v6.600H4L2.500 9.300V7.300H.7z" /><path d="M2.500 5.300h3M6.500 5.300h3" /></svg></button>
        </div>
        <div class="set">
          <button class="pb skip" aria-label="10秒戻る"><svg width="12" height="5" viewBox="0 0 12 5"><path d="M1 .5v3h3M1 3.500C3 0 9 0 11 4" /></svg><span>10</span></button>
          <button class="pb" aria-label="再生"><svg width="8" height="10" viewBox="0 0 8 10"><path d="M1 1l6 4-6 4z" /></svg></button>
          <button class="pb skip" aria-label="30秒進む"><svg width="12" height="5" viewBox="0 0 12 5"><path d="M11 .5v3H8M11 3.500C9 0 3 0 1 4" /></svg><span>30</span></button>
        </div>
        <div class="set">
          <button class="pb" aria-label="編集"><svg width="12" height="12" viewBox="0 0 12 12"><path d="M1 11l1-3.500L8.700 1l2.300 2L4.500 10zM7.500 2.200l2.300 2.200" /></svg></button>
          <button class="pb" aria-label="ミニ表示"><svg width="12" height="9" viewBox="0 0 12 9"><path d="M.7.7h10.600v7H.7zM5 3h4.500v2.500H5zM2 3h2" /></svg></button>
          <button class="pb" aria-label="全画面表示の終了"><svg width="11" height="11" viewBox="0 0 11 11"><path d="M10.500.5L6.500 4.500M6.500 1.500v3h3M.5 10.500l4-4M1.500 6.500h3v3" /></svg></button>
          <button class="pb" aria-label="その他"><svg width="11" height="3" viewBox="0 0 11 3"><path d="M.5 1.500h1.200M5 1.500h1.200M9.300 1.500h1.200" /></svg></button>
        </div>
      </div>
    </div>
  </main>
</template>

<style>
html, body { background: #000; }
</style>

<style scoped>
.player, .player * { box-sizing: border-box; }
.defs { position: absolute; width: 0; height: 0; }
.player {
  position: relative; display: flex; min-height: 100vh; background: #000; overflow: hidden;
  font-family: "Noto Sans CJK JP", "Noto Sans", sans-serif; font-size: 7px; line-height: 9px; color: #444;
}
.player svg { flex: none; }
button, input, select { font: inherit; color: inherit; border: 0; background: none; padding: 0; margin: 0; outline: 0; min-width: 0; }
button { display: flex; align-items: center; justify-content: center; white-space: nowrap; font-feature-settings: "palt"; }
.caret { width: 3px; height: 2px; color: #666; align-self: center; justify-self: center; }
.side { flex: 0 0 80px; display: flex; flex-direction: column; align-items: flex-start; padding: 4px; }
.side .prev { margin: auto 0; width: 8px; }
.side .top { width: 16px; height: 8px; }
.pb svg { fill: none; stroke: #e8e8e8; stroke-width: 1; }
.desktop { flex: 1; min-width: 0; display: flex; flex-direction: column; height: 100vh; }
.excel { position: relative; flex: 1; min-height: 0; display: flex; flex-direction: column; background: #e6e6e6; }
.shade {
  position: absolute; left: 0; right: 0; bottom: 0; height: 88px; pointer-events: none;
  background: linear-gradient(rgba(0,0,0,0), rgba(0,0,0,.27) 40%, rgba(0,0,0,.44) 72%, rgba(0,0,0,.54));
}

/* title and tabs */
.green { position: relative; background: #1e6b47; color: #fff; }
.art { position: absolute; right: 0; top: 0; }
.titlebar { position: relative; height: 20px; display: grid; grid-template-columns: 1fr auto 1fr; align-items: center; }
.quick { display: grid; grid-template-columns: 16px 18px 4px 16px 4px 14px 6px 16px; justify-items: center; align-items: center; padding-left: 8px; }
.quick .caret { color: #fff; }
.off { opacity: .3; }
h1 { margin: 0; font-size: 7px; font-weight: 400; line-height: 18px; }
.winbtns { display: flex; justify-content: flex-end; padding-right: 1px; align-items: center; }
.winbtns button { width: 26px; height: 16px; }
.winbtns button svg { fill: none; stroke: #fff; stroke-width: .8; }
.winbtns > svg { margin-right: 7px; }
.account { width: 53px; height: 14px; background: linear-gradient(#2d7453, #4b876b, #2d7453); }
.tabs { position: relative; height: 17px; display: flex; }
.tabs .active { background: #f3f3f3; color: #1e6b47; }
.w35 { width: 35px; } .w31 { width: 31px; } .w30 { width: 30px; } .w59 { width: 59px; } .w53 { width: 53px; }
.tell, .share { gap: 7px; }
.tell { margin-left: 8px; }
.share { gap: 4px; margin-left: auto; padding-right: 12px; }

/* ribbon */
.ribbon { display: flex; height: 52px; padding: 2px 0 0; background: #f3f3f3; border-bottom: 1px solid #dadada; }
.group { display: flex; flex-direction: column; border-right: 1px solid #d0d0d0; margin-bottom: 1px; }
.g-clip { width: 113px; } .g-font { width: 144px; } .g-align { width: 171px; } .g-num { width: 83px; }
.g-style { width: 107px; } .g-cell { width: 80px; } .g-edit { width: 123px; }
.body { height: 39px; display: flex; }
.group footer { display: flex; flex: 1; align-items: center; font-feature-settings: "palt"; }
.group footer span { flex: 1; text-align: center; }
.group footer button { width: 9px; }
.big { flex-direction: column; justify-content: flex-start; padding-top: 1px; line-height: 9px; }
.big > span { line-height: 8px; margin-top: 2px; }
.big span .caret { margin-left: 3px; vertical-align: 2px; }
.big > .caret { margin-top: 3px; }
.narrow, .paste, .g-clip .list { font-size: 6px; }
.paste { width: 33px; color: #b4b4b4; }
.paste .caret { color: #bbb; }
.list { display: grid; grid-template-rows: repeat(3, 13px); }
.list button { justify-content: flex-start; gap: 3px; }
.list .caret { margin-left: 4px; }
.g-edit .list { width: 57px; padding-left: 5px; }
.g-edit .list .caret { margin-left: 2px; }
.rows { flex-direction: column; padding-top: 4px; gap: 4px; }
.line { height: 13px; display: grid; align-items: center; }
.font-top { grid-template-columns: 88px 23px 16px 12px; padding-left: 4px; }
.font-bot { grid-template-columns: 14px 13px 12px 10px 14px 8px 14px 8px 14px 6px 18px 4px; padding-left: 3px; }
.sel { position: relative; display: block; height: 13px; }
span.sel select { width: 100%; height: 13px; padding-left: 1px; appearance: none; background: #fff; border: 1px solid #c6c6c6; font-feature-settings: "palt"; }
span.sel .caret { position: absolute; right: 4px; top: 5px; }
.aa { align-items: flex-start; font-size: 9px; line-height: 10px; }
.aa.sm { font-size: 8px; }
.b, .it, .u, .fc { font-family: "Open Sans", sans-serif; font-size: 8px; font-weight: 700; }
.it { font-style: italic; }
.u { text-decoration: underline; }
.fc { justify-self: center; width: 9px; line-height: 8px; border-bottom: 2px solid #f02010; }
.al { grid-template-columns: 13px 13px 13px 3px 13px 13px 5px auto; justify-content: start; padding-left: 3px; }
.al button { height: 13px; }
.al .on { background: #cdcdcd; border: 1px solid #b5b5b5; }
.txt { gap: 2px; justify-content: flex-start; }
.txt .caret { margin-left: 4px; }
.num-top { padding: 0 4px; }
.num-bot { grid-template-columns: 16px 4px 16px 10px 4px 13px 13px; padding-left: 2px; }
.pct { font-size: 9px; }
.comma { font-size: 12px; font-weight: 700; line-height: 6px; padding-bottom: 5px; }
.g-style .body { display: grid; grid-template-columns: 28px 39px 31px; padding-left: 5px; }
.g-cell .body { display: grid; grid-template-columns: repeat(3, 24px); padding-left: 4px; }
.sort { width: 35px; }
.find { width: 24px; }
.collapse { margin: auto 4px 1px auto; }

/* formula bar */
.formula { display: flex; align-items: center; padding: 7px 3px 5px; height: 28px; }
.formula > div { display: flex; align-items: center; height: 16px; background: #fff; border: 1px solid #dcdcdc; }
.formula > div input { flex: 1; font-size: 9px; height: 14px; color: #555; }
.name { width: 59px; padding: 0 3px 0 2px; }
.formula .grip { margin: 0 8px 0 7px; }
.fx { width: 63px; }
.fx button { flex: 1; }
.fn { font: italic 700 9px "Liberation Serif", serif; }
.fin { flex: 1; margin-left: 1px; padding: 0 2px 0 6px; }

/* worksheet */
.sheet { flex: 1; min-height: 0; display: flex; overflow: hidden; align-items: stretch; }
.gridwrap { position: relative; flex: 1; min-width: 0; height: 414px; }
table { display: grid; grid-template-columns: 17px repeat(21, 1fr); grid-template-rows: 14px repeat(29, 1fr); height: 100%; background: #fff; }
thead, tbody, tr { display: contents; }
th, td { padding: 0; min-width: 0; min-height: 0; overflow: hidden; border-right: 1px solid #e3e3e3; border-bottom: 1px solid #e3e3e3; white-space: nowrap; font-size: 8px; line-height: 13px; }
th { background: #e6e6e6; font-weight: 400; text-align: center; border-color: #d2d2d2; color: #444; }
th.dk { border-bottom-color: #777; }
th.sel { background: #d2d2d2; color: #217346; border-color: #217346; }
thead th.sel { border-right-color: #bbb; }
tbody th.sel { border-bottom-color: #bbb; }
.corner { display: flex; justify-content: flex-end; align-items: flex-end; padding: 1px; }
td { padding-left: 1px; color: #444; text-align: left; }
td.num { text-align: right; font-size: 9px; padding: 0; }
td.db { border-bottom-color: #6c6c6c; }
td.dr { border-right-color: #6c6c6c; }
td.head { background: #d9e2f3; }
td.diag { padding: 0; }
td.diag svg { display: block; width: 100%; height: 100%; }
.active-cell, .drag { position: absolute; left: 95px; width: 42px; border: 1px solid #217346; }
.active-cell { top: 110px; height: 15px; }
.drag { top: 110px; height: 23px; border-width: 2px; border-color: #2b7b50; }
.marks { position: absolute; left: 128px; top: 111px; }
.vscroll { width: 11px; display: flex; flex-direction: column; background: #d9d9d9; border-left: 1px solid #c4c4c4; padding: 1px 1px 0 0; }
.vscroll button { height: 10px; background: #fff; border: 1px solid #cfcfcf; }
.vscroll .thumb { flex: 1; margin: 1px 0 14px; background: #fff; border: 1px solid #d4d4d4; }
.sheetbar { display: flex; align-items: center; height: 13px; padding-left: 6px; border-top: 1px solid #c9c9c9; }
.nav { width: 12px; height: 12px; }
.sh { width: 37px; height: 11px; margin-left: 12px; align-self: flex-start; background: #f2f2f2; border-bottom: 2px solid #217346; color: #217346; font-size: 8px; }
.add { margin-left: 13px; }
.hscroll { margin-left: auto; width: 40%; display: flex; align-items: center; gap: 1px; height: 9px; padding-right: 12px; }
.hscroll .grip { margin-right: 4px; }
.hscroll button { width: 9px; height: 9px; background: #eee; border: 1px solid #ccc; }
.hscroll .thumb { flex: 1; height: 9px; background: #f0f0f0; border: 1px solid #c6c6c6; margin-right: 15px; }
.status { display: flex; align-items: center; height: 12px; border-top: 1px solid #c8c8c8; padding: 0 5px 0 4px; background: #f0f0f0; }
.status p { margin: 0 auto 0 0; font-size: 6px; font-feature-settings: "palt"; white-space: nowrap; }
.disp { gap: 2px; margin-right: 11px; }
.view { width: 23px; height: 11px; }
.view.on { background: #c8c8c8; }
.zm { width: 10px; }
.zoom { appearance: none; width: 56px; height: 9px; background: linear-gradient(#999, #999) center / 100% 1px no-repeat; }
.zoom::-webkit-slider-thumb { appearance: none; width: 3px; height: 7px; background: #333; }
.pc { font-size: 7px; margin-left: 5px; }

/* taskbar */
.taskbar { height: 23px; display: flex; align-items: center; background: linear-gradient(90deg, #101d24, #10181f 60%, #121b2b); color: #9aa0a6; border-bottom: 1px solid #050912; }
.start { width: 27px; height: 22px; }
.search { width: 198px; height: 22px; display: flex; align-items: center; gap: 5px; padding-left: 8px; background: #606060; }
.search input { flex: 1; font-size: 8px; font-feature-settings: "palt"; }
.search input::placeholder { color: #1c1c1c; opacity: 1; }
.apps { display: flex; height: 22px; gap: 1px; }
.apps button { width: 28px; height: 22px; border-bottom: 1px solid transparent; }
.apps .run { border-bottom-color: #66757f; }
.apps .lit { background: #27333a; }
.tray { display: flex; gap: 10px; margin-left: 28px; align-items: center; }
.ime { margin-left: auto; font-size: 8px; }
.ball { margin-left: 9px; }
.clock { display: flex; flex-direction: column; align-items: center; width: 46px; margin-left: 6px; font-family: "Open Sans", sans-serif; font-size: 7px; line-height: 11px; }
.note { margin: 0 14px 0 6px; }

/* media controls */
.mark { position: absolute; left: 747px; bottom: 4px; margin: 0; font: 14px/18px "Open Sans", sans-serif; color: #b4b6b8; white-space: nowrap; }
.controls { position: absolute; left: 0; right: 0; bottom: 19px; padding: 0 13px; color: #eee; }
.seek { display: block; appearance: none; width: 100%; height: 12px;
  background: linear-gradient(90deg, #46a5da var(--played), rgba(150,150,150,.35) var(--played)) center / 100% 2px no-repeat; }
.seek::-webkit-slider-thumb { appearance: none; box-sizing: border-box; width: 11px; height: 11px; border: 1px solid #5cb8ea; border-radius: 50%; background: #959595; box-shadow: inset 0 0 0 1px #5cb8ea; }
.times { display: flex; justify-content: space-between; font: 6px/10px "Open Sans", sans-serif; }
.bar { display: grid; grid-template-columns: 1fr auto 1fr; align-items: center; height: 24px; }
.set { display: flex; }
.set:last-child { justify-content: flex-end; }
.pb { width: 27px; }
.skip { flex-direction: column; }
.skip span { font: 700 7px/7px "Open Sans", sans-serif; }
</style>
